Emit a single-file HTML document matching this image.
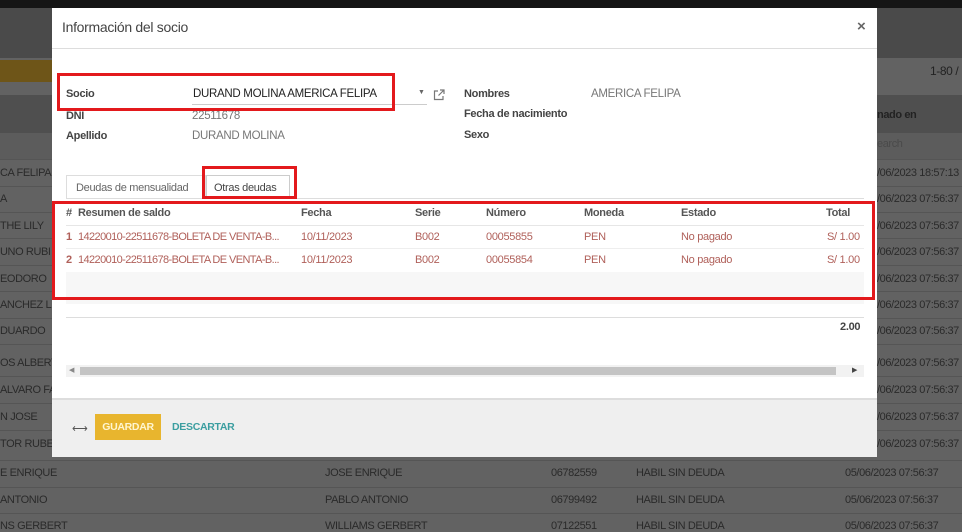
<!DOCTYPE html>
<html><head><meta charset="utf-8"><style>
*{margin:0;padding:0;box-sizing:border-box}
body{width:962px;height:528px;overflow:hidden;background:#626262;font-family:"Liberation Sans",Arial,sans-serif;position:relative;font-size:12px;letter-spacing:-0.3px}
.a{position:absolute;white-space:nowrap}
.bg{color:#2a2a2a;font-size:11px;letter-spacing:-0.4px}
.rowl{position:absolute;left:0;width:962px;height:1px;background:#555}
.modal{position:absolute;left:52px;top:8px;width:825px;height:449px;background:#fff}
.lbl{font-weight:bold;color:#444;font-size:11px}
.val{color:#777;font-size:11.5px}
.red{position:absolute;border:3px solid #e3191c}
.th{font-weight:bold;color:#555;font-size:11px}
.td{color:#b0605a;font-size:11px}
</style></head><body>
<div class="a" style="left:0;top:0;width:962px;height:8px;background:#151515"></div>
<div class="a" style="left:877px;top:8px;width:85px;height:8px;background:#151515"></div>
<div class="a" style="left:0;top:8px;width:962px;height:50px;background:#4a4a4a"></div>
<div class="a" style="left:0;top:60px;width:52px;height:22px;background:#6e5518"></div>
<div class="a" style="left:0;top:95px;width:962px;height:38px;background:#4f4f4f"></div>
<div class="a" style="left:0;top:133px;width:962px;height:26px;background:#5c5c5c"></div>
<div class="a bg" style="left:930px;top:64px;font-size:12px;color:#222">1-80 /</div>
<div class="a bg" style="left:877px;top:109px;font-weight:bold;color:#222">nado en</div>
<div class="a bg" style="left:877px;top:138px;color:#4a4a4a">earch</div>
<div class="rowl" style="top:159px"></div><div class="rowl" style="top:186px"></div><div class="rowl" style="top:212px"></div><div class="rowl" style="top:238px"></div><div class="rowl" style="top:265px"></div><div class="rowl" style="top:291px"></div><div class="rowl" style="top:318px"></div><div class="rowl" style="top:344px"></div><div class="rowl" style="top:376px"></div><div class="rowl" style="top:403px"></div><div class="rowl" style="top:430px"></div><div class="rowl" style="top:460px"></div><div class="rowl" style="top:487px"></div><div class="rowl" style="top:513px"></div>
<div class="a bg" style="left:0;top:167px">CA FELIPA</div>
<div class="a bg" style="left:0;top:193px">A</div>
<div class="a bg" style="left:0;top:220px">THE LILY</div>
<div class="a bg" style="left:0;top:246px">UNO RUBI</div>
<div class="a bg" style="left:0;top:273px">EODORO</div>
<div class="a bg" style="left:0;top:299px">ANCHEZ LU</div>
<div class="a bg" style="left:0;top:325px">DUARDO</div>
<div class="a bg" style="left:0;top:357px">OS ALBERT</div>
<div class="a bg" style="left:0;top:384px">ALVARO FA</div>
<div class="a bg" style="left:0;top:411px">N JOSE</div>
<div class="a bg" style="left:0;top:438px">TOR RUBE</div>
<div class="a bg" style="left:0;top:467px">E ENRIQUE</div><div class="a bg" style="left:325px;top:467px">JOSE ENRIQUE</div><div class="a bg" style="left:551px;top:467px">06782559</div><div class="a bg" style="left:636px;top:467px">HABIL SIN DEUDA</div>
<div class="a bg" style="left:0;top:494px">ANTONIO</div><div class="a bg" style="left:325px;top:494px">PABLO ANTONIO</div><div class="a bg" style="left:551px;top:494px">06799492</div><div class="a bg" style="left:636px;top:494px">HABIL SIN DEUDA</div>
<div class="a bg" style="left:0;top:520px">NS GERBERT</div><div class="a bg" style="left:325px;top:520px">WILLIAMS GERBERT</div><div class="a bg" style="left:551px;top:520px">07122551</div><div class="a bg" style="left:636px;top:520px">HABIL SIN DEUDA</div>
<div class="a bg" style="left:877px;top:167px">/06/2023 18:57:13</div>
<div class="a bg" style="left:877px;top:193px">/06/2023 07:56:37</div>
<div class="a bg" style="left:877px;top:220px">/06/2023 07:56:37</div>
<div class="a bg" style="left:877px;top:246px">/06/2023 07:56:37</div>
<div class="a bg" style="left:877px;top:273px">/06/2023 07:56:37</div>
<div class="a bg" style="left:877px;top:299px">/06/2023 07:56:37</div>
<div class="a bg" style="left:877px;top:325px">/06/2023 07:56:37</div>
<div class="a bg" style="left:877px;top:357px">/06/2023 07:56:37</div>
<div class="a bg" style="left:877px;top:384px">/06/2023 07:56:37</div>
<div class="a bg" style="left:877px;top:411px">/06/2023 07:56:37</div>
<div class="a bg" style="left:877px;top:438px">/06/2023 07:56:37</div>
<div class="a bg" style="left:845px;top:467px">05/06/2023 07:56:37</div>
<div class="a bg" style="left:845px;top:494px">05/06/2023 07:56:37</div>
<div class="a bg" style="left:845px;top:520px">05/06/2023 07:56:37</div>

<div class="modal">
<div class="a" style="left:10px;top:11px;font-size:14px;color:#444">Información del socio</div>
<div class="a" style="left:805px;top:10px;font-size:15px;color:#666;font-weight:bold">×</div>
<div class="a" style="left:0;top:40px;width:825px;height:1px;background:#ddd"></div>
<div class="a lbl" style="left:14px;top:80px">Socio</div>
<div class="a" style="left:141px;top:80px;font-size:11.5px;color:#222">DURAND MOLINA AMERICA FELIPA</div>
<div class="a" style="left:140px;top:96px;width:235px;height:1px;background:#ccc"></div>
<div class="a" style="left:366px;top:81px;font-size:7px;color:#666">▼</div>
<svg class="a" style="left:381px;top:81px" width="12" height="12" viewBox="0 0 12 12"><path d="M5 2H1.5v8.5H10V7M7 1h4v4M11 1 5.5 6.5" fill="none" stroke="#777" stroke-width="1.2"/></svg>
<div class="a lbl" style="left:14px;top:102px">DNI</div>
<div class="a val" style="left:140px;top:102px">22511678</div>
<div class="a lbl" style="left:14px;top:122px">Apellido</div>
<div class="a val" style="left:140px;top:122px">DURAND MOLINA</div>
<div class="a lbl" style="left:412px;top:80px">Nombres</div>
<div class="a val" style="left:539px;top:80px">AMERICA FELIPA</div>
<div class="a lbl" style="left:412px;top:100px">Fecha de nacimiento</div>
<div class="a lbl" style="left:412px;top:121px">Sexo</div>
<div class="a" style="left:14px;top:167px;width:140px;height:24px;border:1px solid #ddd;border-bottom:none"></div>
<div class="a" style="left:24px;top:174px;font-size:11px;color:#666">Deudas de mensualidad</div>
<div class="a" style="left:154px;top:167px;width:84px;height:24px;border:1px solid #ccc;border-bottom:none"></div>
<div class="a" style="left:162px;top:174px;font-size:11px;color:#444">Otras deudas</div>
<div class="a" style="left:14px;top:190px;width:798px;height:1px;background:#ddd"></div>
<div class="a th" style="left:14px;top:199px">#</div>
<div class="a th" style="left:26px;top:199px">Resumen de saldo</div>
<div class="a th" style="left:249px;top:199px">Fecha</div>
<div class="a th" style="left:363px;top:199px">Serie</div>
<div class="a th" style="left:434px;top:199px">Número</div>
<div class="a th" style="left:532px;top:199px">Moneda</div>
<div class="a th" style="left:629px;top:199px">Estado</div>
<div class="a th" style="left:774px;top:199px">Total</div>
<div class="a" style="left:14px;top:217px;width:798px;height:1px;background:#e6e6e6"></div>
<div class="a" style="left:14px;top:240px;width:798px;height:1px;background:#eee"></div>
<div class="a" style="left:14px;top:264px;width:798px;height:32px;background:#f7f7f7"></div>
<div class="a td" style="left:14px;top:223px;font-weight:bold">1</div>
<div class="a td" style="left:26px;top:223px;letter-spacing:-0.6px">14220010-22511678-BOLETA DE VENTA-B...</div>
<div class="a td" style="left:249px;top:223px">10/11/2023</div>
<div class="a td" style="left:363px;top:223px">B002</div>
<div class="a td" style="left:434px;top:223px">00055855</div>
<div class="a td" style="left:532px;top:223px">PEN</div>
<div class="a td" style="left:629px;top:223px">No pagado</div>
<div class="a td" style="left:775px;top:223px">S/ 1.00</div>
<div class="a td" style="left:14px;top:246px;font-weight:bold">2</div>
<div class="a td" style="left:26px;top:246px;letter-spacing:-0.6px">14220010-22511678-BOLETA DE VENTA-B...</div>
<div class="a td" style="left:249px;top:246px">10/11/2023</div>
<div class="a td" style="left:363px;top:246px">B002</div>
<div class="a td" style="left:434px;top:246px">00055854</div>
<div class="a td" style="left:532px;top:246px">PEN</div>
<div class="a td" style="left:629px;top:246px">No pagado</div>
<div class="a td" style="left:775px;top:246px">S/ 1.00</div>
<div class="a" style="left:14px;top:309px;width:798px;height:1px;background:#ddd"></div>
<div class="a" style="left:788px;top:313px;font-weight:bold;color:#444;font-size:11px">2.00</div>
<div class="a" style="left:14px;top:357px;width:798px;height:12px;background:#f2f2f2"></div>
<div class="a" style="left:28px;top:359px;width:756px;height:8px;background:#c4c4c4"></div>
<div class="a" style="left:17px;top:358px;font-size:7px;color:#888">◀</div>
<div class="a" style="left:800px;top:358px;font-size:7px;color:#444">▶</div>
<div class="a" style="left:0;top:390px;width:825px;height:59px;background:#efefef;border-top:2px solid #ddd"></div>
<div class="a" style="left:20px;top:414px;font-size:11px;color:#555">⟷</div>
<div class="a" style="left:43px;top:406px;width:66px;height:26px;background:#e8b52e;color:#fff6d0;font-weight:bold;font-size:10.5px;text-align:center;line-height:26px">GUARDAR</div>
<div class="a" style="left:120px;top:413px;color:#3b9ea0;font-weight:bold;font-size:10.5px">DESCARTAR</div>
</div>
<div class="red" style="left:57px;top:73px;width:338px;height:38px"></div>
<div class="red" style="left:202px;top:166px;width:95px;height:33px"></div>
<div class="red" style="left:52px;top:201px;width:823px;height:99px"></div>
</body></html>
